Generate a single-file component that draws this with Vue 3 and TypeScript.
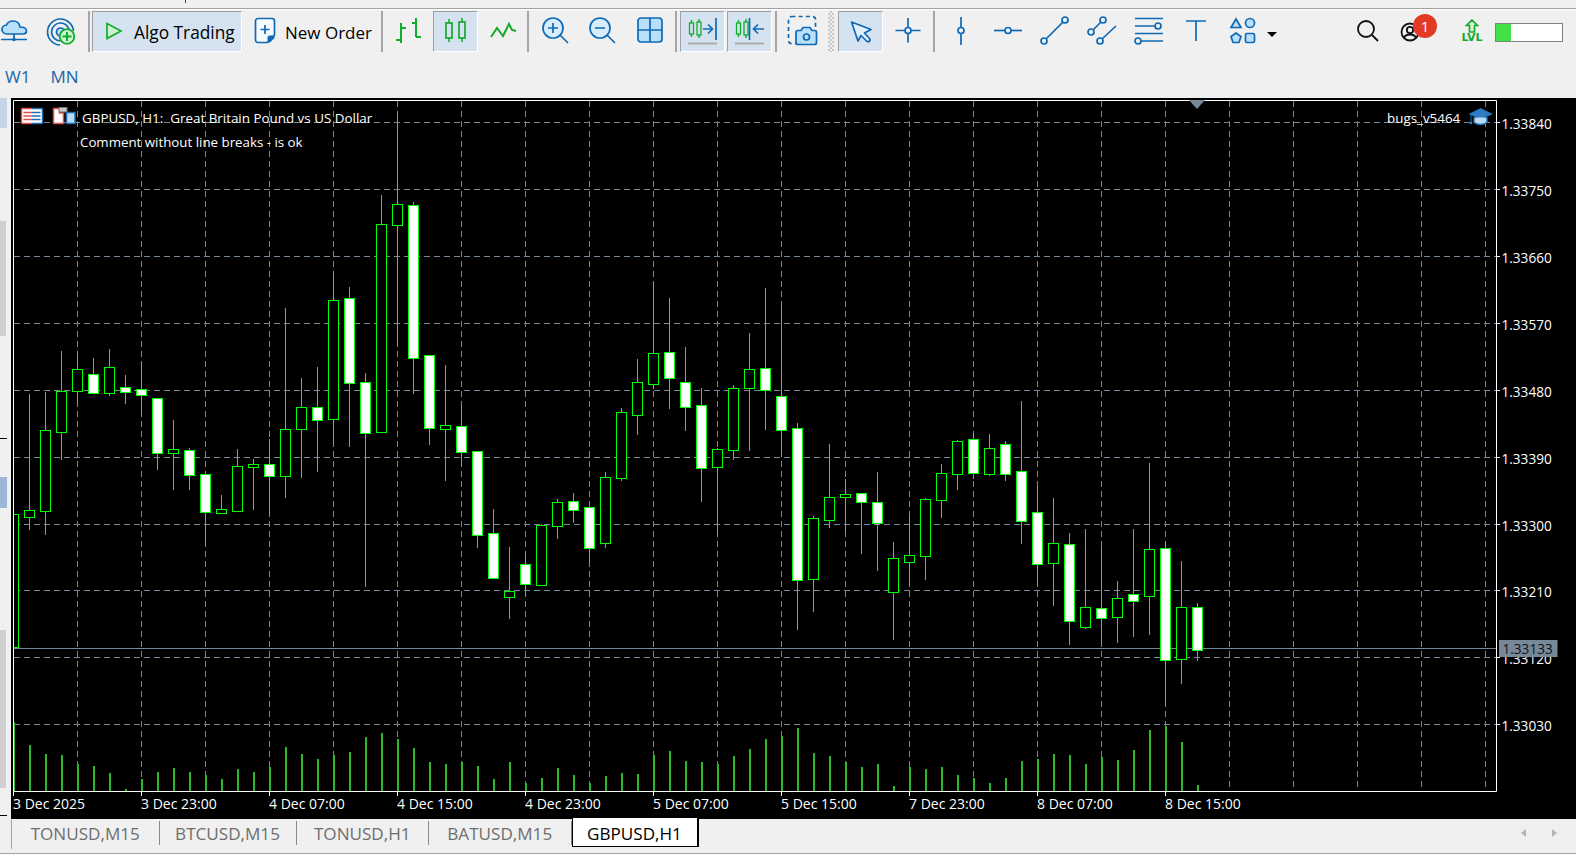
<script setup lang="ts">
type Raw = [number, number, number, number, number]
// wick top, wick bottom, body top, body bottom, bear (white)
const raw: Raw[] = [
  [514,647,514,647,0],[394,530,510,517,0],[392,535,430,511,0],[351,460,391,432,0],[351,404,369,391,0],
  [358,394,374,393,1],[349,396,367,393,0],[375,404,387,392,1],[362,415,389,395,1],[398,470,398,453,1],
  [420,490,449,453,0],[448,490,450,475,1],[474,545,474,512,1],[495,513,509,513,0],[449,512,466,511,0],
  [459,510,464,467,0],[439,515,464,476,1],[308,498,429,476,0],[378,478,407,429,0],[367,472,407,420,1],
  [271,445,300,419,0],[287,447,298,383,1],[373,587,382,433,1],[195,432,224,432,0],[113,345,204,225,0],
  [202,394,205,358,1],[355,445,355,428,1],[365,481,425,429,0],[405,467,426,452,1],[451,548,451,535,1],
  [509,578,533,578,1],[547,619,591,597,0],[553,596,564,584,1],[524,585,525,585,0],[499,539,502,526,0],
  [493,523,501,510,1],[507,563,507,548,1],[472,548,477,543,0],[408,481,412,478,0],[359,435,382,415,0],
  [282,389,353,384,0],[298,409,352,378,1],[347,431,382,407,1],[388,502,405,468,1],[448,537,449,467,0],
  [385,460,388,450,0],[333,451,369,388,0],[288,430,368,390,1],[306,457,396,430,1],[423,630,428,580,1],
  [516,612,518,579,0],[444,528,497,520,0],[479,533,494,497,0],[493,554,493,502,1],[472,571,502,523,1],
  [542,640,558,592,0],[515,585,555,562,0],[498,580,499,556,0],[464,518,473,500,0],[440,490,441,474,0],
  [433,479,439,473,1],[434,476,448,474,0],[441,481,444,474,1],[401,544,471,521,1],[486,585,512,564,1],
  [498,606,543,563,0],[533,645,544,621,1],[529,629,607,627,0],[547,645,608,618,1],[581,643,598,617,0],
  [529,637,594,601,1],[463,635,549,596,0],[541,705,548,660,1],[561,684,607,659,0],[603,661,607,650,1],
]
const vols = [69,46,37,36,27,25,18,2,12,19,23,19,16,12,22,19,24,44,37,32,36,39,54,58,52,43,29,27,29,25,12,29,8,13,23,16,8,15,18,17,36,40,30,29,27,35,42,52,55,63,38,35,29,24,27,5,24,22,24,16,13,8,13,30,32,37,36,27,34,31,41,61,65,49,6]

const candles = raw.map((c, i) => ({
  x: 13 + 16 * i,
  wt: c[0],
  wb: c[1],
  bt: c[2],
  bb: c[3],
  bear: c[4] === 1,
}))
const volumes = vols.map((v, i) => ({ x: 13 + 16 * i, h: v }))

const gridX: number[] = []
for (let k = 0; k <= 22; k++) gridX.push(77 + 64 * k)

const prices = [
  { y: 122, t: '1.33840' }, { y: 189, t: '1.33750' }, { y: 256, t: '1.33660' }, { y: 323, t: '1.33570' },
  { y: 390, t: '1.33480' }, { y: 457, t: '1.33390' }, { y: 524, t: '1.33300' }, { y: 590, t: '1.33210' },
  { y: 657, t: '1.33120' }, { y: 724, t: '1.33030' },
]
const times = [
  { x: 13, t: '3 Dec 2025' }, { x: 141, t: '3 Dec 23:00' }, { x: 269, t: '4 Dec 07:00' }, { x: 397, t: '4 Dec 15:00' },
  { x: 525, t: '4 Dec 23:00' }, { x: 653, t: '5 Dec 07:00' }, { x: 781, t: '5 Dec 15:00' }, { x: 909, t: '7 Dec 23:00' },
  { x: 1037, t: '8 Dec 07:00' }, { x: 1165, t: '8 Dec 15:00' },
]
const tabs = [
  { t: 'TONUSD,M15', w: 147.5, active: false },
  { t: 'BTCUSD,M15', w: 137, active: false },
  { t: 'TONUSD,H1', w: 132.5, active: false },
  { t: 'BATUSD,M15', w: 142.5, active: false },
  { t: 'GBPUSD,H1', w: 127, active: true },
]
const headerText = 'GBPUSD, H1:  Great Britain Pound vs US Dollar'
</script>

<template>
  <div class="app">
    <div class="strip"><span class="strip-mark"></span></div>

    <div class="toolbar">
      <div class="slot w28">
        <svg class="ic" viewBox="0 0 30 30"><path class="lt" d="M8 19C4.500 19 3 16.500 3 14.500C3 12 5 10 7.500 10C8.500 7.500 11 6 14 6C18 6 20.500 8.500 21 12C25 12 27.500 13.500 27.500 16C27.500 18 26 19 24 19Z"/><path d="M2 24.500H28M15 19V24.500"/><circle class="solid" cx="15" cy="24.500" r="1.800"/></svg>
      </div>
      <div class="slot w28 ml19">
        <svg class="ic" viewBox="0 0 30 30"><path d="M14 30A13 13 0 1 1 27.500 16M14.500 26A9 9 0 1 1 23.500 16"/><circle class="lt" cx="14.500" cy="17" r="4"/><circle class="gr-lt" cx="21" cy="21.500" r="7.300"/><path class="gr" d="M21 17V26M16.500 21.500H25.500"/></svg>
      </div>
      <div class="sep ml13"></div>
      <div class="btn active algo">
        <svg class="play" viewBox="0 0 18 18"><polygon points="2,1.500 16,9 2,16.500"/></svg>
        <span class="algo-text">Algo Trading</span>
      </div>
      <div class="neworder">
        <svg class="doc" viewBox="0 0 22 27"><path class="doc-b" d="M4 1.500H18A2.500 2.500 0 0 1 20.500 4V18L13.500 25.500H4A2.500 2.500 0 0 1 1.500 23V4A2.500 2.500 0 0 1 4 1.500Z"/><path class="doc-c" d="M20.500 18.500V21L16 25.500H13.500V20.500A2 2 0 0 1 15.500 18.500Z"/><path class="doc-p" d="M11 8V17M6.500 12.500H15.500"/></svg>
        <span class="no-text">New Order</span>
      </div>
      <div class="sep"></div>

      <div class="slot ml3">
        <svg class="ic" viewBox="0 0 30 30"><path class="gr" d="M7 8V28M7 13H12M2 25H7M22 3V22M22 22H27M18 8H22" /></svg>
      </div>
      <div class="btn active cell ml2">
        <svg class="ic" viewBox="0 0 30 30"><path class="gr thin" d="M8 4V8M8 23V27M21 3V7M21 23V27"/><rect class="gr-f" x="5" y="8" width="6" height="15"/><rect class="gr-f" x="18" y="7" width="6" height="16"/></svg>
      </div>
      <div class="slot ml2">
        <svg class="ic" viewBox="0 0 30 30"><polyline class="gr" points="3,22 9,13 15,21 21,9 24,15 28,16"/></svg>
      </div>
      <div class="sep ml2"></div>

      <div class="slot ml2">
        <svg class="ic" viewBox="0 0 30 30"><circle class="pale" cx="14" cy="13" r="10"/><path d="M21 20L29 28M9 13H19M14 8V18"/></svg>
      </div>
      <div class="slot ml2">
        <svg class="ic" viewBox="0 0 30 30"><circle class="pale" cx="14" cy="13" r="10"/><path d="M21 20L29 28M9 13H19"/></svg>
      </div>
      <div class="slot ml4">
        <svg class="ic" viewBox="0 0 30 30"><rect class="lt" x="3" y="3" width="24" height="24" rx="3"/><path d="M15 3V27M3 15H27"/></svg>
      </div>
      <div class="sep ml3"></div>

      <div class="btn active cell ml3">
        <svg class="ic" viewBox="0 0 30 30"><path class="gr thin" d="M3.500 5V8M3.500 19V22M11 4V7M11 20V23"/><rect class="gr-f small" x="1.500" y="8" width="4" height="11"/><rect class="gr-f small" x="9" y="7" width="4" height="13"/><path d="M15 14H24M20 9.500L24.500 14L20 18.500M28 3V25"/><path class="rule" d="M0 28.500H29"/></svg>
      </div>
      <div class="btn active cell ml2">
        <svg class="ic" viewBox="0 0 30 30"><path class="gr thin" d="M3.500 5V8M3.500 19V22M11 4V7M11 20V23"/><rect class="gr-f small" x="1.500" y="8" width="4" height="11"/><rect class="gr-f small" x="9" y="7" width="4" height="13"/><path d="M14.500 3V25M29 14H18.500M23 9.500L18.500 14L23 18.500"/><path class="rule" d="M0 28.500H29"/></svg>
      </div>
      <div class="sep ml3"></div>

      <div class="slot ml2">
        <svg class="ic" viewBox="0 0 30 30"><rect class="dash" x="1.500" y="1.500" width="27" height="27" rx="3"/><path class="lt" d="M11 15.500H14L16 12.500H23L25 15.500H27.500A2 2 0 0 1 29.500 17.500V27.500A2 2 0 0 1 27.500 29.500H11A2 2 0 0 1 9 27.500V17.500A2 2 0 0 1 11 15.500Z"/><circle cx="19.500" cy="22" r="3"/></svg>
      </div>
      <div class="grip"></div>
      <div class="btn active cell ml4">
        <svg class="ic" viewBox="0 0 30 30"><path class="pale2" d="M5.500 7L25 14.500L18.500 18L23.500 23.500A1 1 0 0 1 20.500 26L15 20.500L12 26Z"/></svg>
      </div>
      <div class="slot ml2">
        <svg class="ic" viewBox="0 0 30 30"><path d="M15 3V27.500M2.500 15.500H27.500"/><circle class="bgf" cx="15" cy="15.500" r="3"/></svg>
      </div>
      <div class="sep ml3"></div>

      <div class="slot ml3">
        <svg class="ic" viewBox="0 0 30 30"><path d="M15 2V30"/><circle class="bgf" cx="15" cy="15.500" r="3"/></svg>
      </div>
      <div class="slot ml2">
        <svg class="ic" viewBox="0 0 30 30"><path d="M1 15.500H29"/><circle class="bgf" cx="15" cy="15.500" r="3"/></svg>
      </div>
      <div class="slot ml2">
        <svg class="ic" viewBox="0 0 30 30"><path d="M6 24L23 7"/><circle class="bgf" cx="4" cy="26" r="3"/><circle class="bgf" cx="25" cy="5" r="3"/></svg>
      </div>
      <div class="slot ml2">
        <svg class="ic" viewBox="0 0 30 30"><path d="M6 15L14 7M15 24L29 11"/><circle class="bgf" cx="4" cy="17" r="3"/><circle class="bgf" cx="16" cy="5" r="3"/><circle class="bgf" cx="13" cy="26" r="3"/></svg>
      </div>
      <div class="slot ml2">
        <svg class="ic" viewBox="0 0 30 30"><path d="M1 3.500H29M1 11H21M1 18.500H29M7 26H29"/><circle class="bgf" cx="24" cy="11" r="3"/><circle class="bgf" cx="4" cy="26" r="3"/></svg>
      </div>
      <div class="slot ml2">
        <svg class="ic" viewBox="0 0 30 30"><path d="M5 6H25M15 6V26"/></svg>
      </div>
      <div class="slot ml2">
        <svg class="ic" viewBox="0 0 30 30"><polygon class="lt" points="8,4 13,12.500 3,12.500"/><circle class="lt" cx="22" cy="8" r="4.500"/><polygon class="lt" points="8,18 13,21.500 11,27.500 5,27.500 3,21.500"/><rect class="lt" x="17.500" y="18.500" width="9" height="9" rx="1.500"/></svg>
      </div>
      <div class="caret"></div>

      <div class="slot w30 ml75">
        <svg class="ic blk" viewBox="0 0 30 30"><circle cx="14" cy="14" r="8"/><path d="M20 20L26 26"/></svg>
      </div>
      <div class="slot w30 ml13 user">
        <svg class="ic blk" viewBox="0 0 30 30"><circle cx="15" cy="17" r="8.500"/><circle cx="15" cy="15" r="3.200"/><path d="M9 23C10 20 12 19.500 15 19.500C18 19.500 20 20 21 23"/></svg>
        <span class="badge">1</span>
      </div>
      <div class="lvl">
        <svg class="lvl-up" viewBox="0 0 14 14"><path d="M7 1L12.500 6.500H9.500V13H4.500V6.500H1.500Z"/></svg>
        <span class="lvl-t">LVL</span>
      </div>
      <div class="meter"><div class="meter-fill"></div></div>
    </div>

    <div class="tf">
      <span>W1</span>
      <span>MN</span>
    </div>

    <div class="workspace">
      <div class="rail">
        <div class="r-blue1"></div>
        <div class="r-gray1"></div>
        <div class="r-tick1"></div>
        <div class="r-blue2"></div>
        <div class="r-gray2"></div>
        <div class="r-tick2"></div>
      </div>

      <svg class="chart" width="1565" height="721" viewBox="11 98 1565 721">
        <defs>
          <clipPath id="plotArea"><rect x="14" y="101" width="1482" height="690"/></clipPath>
        </defs>

        <line v-for="x in gridX" :key="'gx' + x" class="grid" :x1="x + 0.5" :x2="x + 0.5" y1="101" y2="791"/>
        <line v-for="p in prices" :key="'gy' + p.y" class="grid" x1="14" x2="1496" :y1="p.y + 0.5" :y2="p.y + 0.5"/>
        <line class="ask" x1="14" x2="1496" y1="648.500" y2="648.500"/>

        <g clip-path="url(#plotArea)">
          <rect v-for="v in volumes" :key="'v' + v.x" class="vol" :x="v.x" :y="791 - v.h" width="2" :height="v.h"/>
          <g v-for="c in candles" :key="'c' + c.x">
            <line class="wick" :x1="c.x + 0.5" :x2="c.x + 0.5" :y1="c.wt" :y2="c.wb"/>
            <rect :class="c.bear ? 'bear' : 'bull'" :x="c.x - 4.5" :y="c.bt + 0.5" width="10" :height="c.bb - c.bt"/>
          </g>
        </g>

        <path class="frame" d="M13.500 100.500H1496.500V791.500H13.500Z"/>
        <line v-for="p in prices" :key="'pt' + p.y" class="frame" x1="1497" x2="1500" :y1="p.y + 0.5" :y2="p.y + 0.5"/>
        <line v-for="t in times" :key="'tt' + t.x" class="frame" :x1="t.x + 0.5" :x2="t.x + 0.5" y1="792" y2="796"/>

        <text v-for="p in prices" :key="'pl' + p.y" class="axis price" x="1501.500" :y="p.y + 7">{{ p.t }}</text>
        <text v-for="t in times" :key="'tl' + t.x" class="axis" :x="t.x" y="809">{{ t.t }}</text>

        <rect class="asklabel" x="1499" y="640" width="58.500" height="17"/>
        <text class="axis price dark" x="1502.500" y="654">1.33133</text>

        <polygon class="shift" points="1189,100 1205,100 1197,109"/>

        <rect class="i1w" x="21.500" y="108.500" width="21" height="15" rx="1"/>
        <path class="i1r" d="M32 108.500H22.500A1 1 0 0 0 21.500 109.500V122.500A1 1 0 0 0 22.500 123.500H32"/>
        <path class="i1b" d="M32 108.500H41.500A1 1 0 0 1 42.500 109.500V122.500A1 1 0 0 1 41.500 123.500H32"/>
        <path class="i1r" d="M23.500 112.500H32M23.500 116H32M23.500 119.500H32"/>
        <path class="i1b" d="M32 112.500H40.500M32 116H40.500M32 119.500H40.500"/>
        <path class="i2r" d="M53.500 108.500H59.500V113H63.500V123.500H53.500Z"/>
        <rect class="i2g" x="59" y="107.500" width="8" height="4.500"/>
        <rect class="i2b" x="66.500" y="112.500" width="8.500" height="11"/>

        <text class="label" x="82" y="122.500">{{ headerText }}</text>
        <text class="label comment" x="80" y="146.500">Comment without line breaks - is ok</text>
        <text class="label" x="1387" y="122.500">bugs_v5464</text>

        <path class="cap" d="M1480.500 108.500L1492 114L1480.500 119L1469.500 114Z"/>
        <path class="cap2" d="M1474 117.500V122.500C1477 125 1484 125 1487 122.500V117.500"/>
        <path class="cap3" d="M1471 115V122"/>
        <circle class="cap4" cx="1471" cy="123" r="1.300"/>
      </svg>
    </div>

    <div class="tabs">
      <div class="tab-lead"></div>
      <div
        v-for="t in tabs"
        :key="t.t"
        :class="['tab', { on: t.active }]"
        :style="{ width: t.w + 'px' }"
      >{{ t.t }}</div>
      <div class="tab-nav">
        <span class="tri-l"></span>
        <span class="tri-r"></span>
      </div>
    </div>
    <div class="foot"></div>
  </div>
</template>

<style>
html, body { margin: 0; background: #fff; }
</style>

<style scoped>
.app {
  width: 1576px;
  height: 862px;
  overflow: hidden;
  background: #f0f0f0;
  font-family: "Open Sans", "Liberation Sans", sans-serif;
  display: flex;
  flex-direction: column;
}
.strip {
  height: 8px;
  flex: none;
  border-bottom: 1px solid #a3a3a3;
  box-shadow: 0 1px 0 #fff;
  position: relative;
}
.strip-mark {
  position: absolute;
  left: 185px;
  top: 0;
  width: 1px;
  height: 3px;
  background: #5a4a30;
}
.toolbar {
  margin-top: 1px;
  padding-top: 1px;
  height: 41px;
  flex: none;
  display: flex;
  align-items: flex-start;
  color: #000;
}
.slot {
  width: 45px;
  height: 41px;
  flex: none;
  display: flex;
  justify-content: center;
  padding-top: 4px;
  box-sizing: border-box;
}
.w28 { width: 28px; }
.w30 { width: 30px; }
.ml2 { margin-left: 2px; }
.ml3 { margin-left: 3px; }
.ml4 { margin-left: 4px; }
.ml13 { margin-left: 13px; }
.ml19 { margin-left: 19px; }
.ml75 { margin-left: 75px; }
.sep {
  width: 2px;
  height: 41px;
  background: #a6a6a6;
  flex: none;
}
.btn {
  height: 41px;
  box-sizing: border-box;
  flex: none;
}
.active {
  background: #d5e3f0;
  border-left: 1px solid #a0a0a0;
  border-top: 1px solid #a0a0a0;
  border-right: 1px solid #fff;
  border-bottom: 1px solid #fff;
}
.cell {
  width: 45px;
  display: flex;
  justify-content: center;
  padding-top: 3px;
}
.algo {
  margin-left: 2px;
  width: 150px;
  display: flex;
  align-items: flex-start;
  padding-left: 12px;
  padding-top: 10px;
}
.play { width: 18px; height: 18px; flex: none; }
.play polygon { fill: #cdf5cd; stroke: #13ab2d; stroke-width: 1.700; }
.algo-text {
  margin-left: 11px;
  margin-top: -1px;
  font-size: 17.300px;
  line-height: 24px;
  white-space: nowrap;
}
.neworder {
  width: 139px;
  height: 41px;
  flex: none;
  display: flex;
  align-items: flex-start;
  padding-left: 12px;
  padding-top: 6px;
  box-sizing: border-box;
}
.doc { width: 22px; height: 27px; flex: none; }
.doc-b { fill: #f6fbff; stroke: #0f69b4; stroke-width: 1.700; }
.doc-c { fill: #0f69b4; }
.doc-p { fill: none; stroke: #0f69b4; stroke-width: 1.700; }
.no-text {
  margin-left: 9px;
  margin-top: 4px;
  font-size: 17px;
  line-height: 24px;
  white-space: nowrap;
}
.ic {
  width: 30px;
  height: 30px;
  fill: none;
  stroke: #0f69b4;
  stroke-width: 1.700;
  overflow: visible;
}
.ic .lt { fill: #b8e0fb; }
.ic .pale { fill: #d8edfb; }
.ic .pale2 { fill: #e2eef8; stroke-linejoin: round; }
.ic .bgf { fill: #f0f0f0; }
.ic .solid { fill: #0f69b4; stroke: none; }
.ic .gr { stroke: #13ab2d; stroke-width: 2; }
.ic .gr.thin { stroke-width: 1.500; }
.ic .gr-f { fill: none; stroke: #13ab2d; stroke-width: 1.700; }
.ic .gr-f.small { stroke-width: 1.300; }
.ic .gr-lt { fill: #c8f5d0; stroke: #13ab2d; stroke-width: 1.800; }
.ic .rule { stroke: #aaa; stroke-width: 2; }
.ic .dash { stroke-dasharray: 4 3.200; }
.ic.blk { stroke: #111; stroke-width: 1.800; }
.grip {
  margin-left: 4px;
  width: 6px;
  height: 41px;
  flex: none;
  background-image: conic-gradient(#c6c6c6 25%, transparent 0 50%, #c6c6c6 0 75%, transparent 0);
  background-size: 4px 4px;
}
.caret {
  margin-left: 2px;
  margin-top: 21px;
  flex: none;
  width: 0;
  height: 0;
  border-left: 5.500px solid transparent;
  border-right: 5.500px solid transparent;
  border-top: 5.500px solid #000;
}
.user { position: relative; }
.badge {
  position: absolute;
  left: 18px;
  top: 3px;
  width: 24px;
  height: 24px;
  border-radius: 50%;
  background: #e23a24;
  color: #fff;
  font-size: 15px;
  line-height: 24px;
  text-align: center;
}
.lvl {
  margin-left: 32px;
  width: 30px;
  height: 41px;
  flex: none;
  display: flex;
  flex-direction: column;
  align-items: center;
  padding-top: 8px;
  box-sizing: border-box;
}
.lvl-up { width: 14px; height: 14px; }
.lvl-up path { fill: #d8f5d8; stroke: #13ab2d; stroke-width: 1.600; }
.lvl-t {
  font-family: "DejaVu Sans", sans-serif;
  font-size: 11px;
  line-height: 10px;
  font-weight: 700;
  color: #13ab2d;
  margin-top: 0;
}
.meter {
  margin-left: 8px;
  margin-top: 12px;
  width: 68px;
  height: 19px;
  box-sizing: border-box;
  border: 1.500px solid #808080;
  background: #fff;
  flex: none;
}
.meter-fill { width: 15px; height: 100%; background: #42e042; }

.tf {
  height: 46px;
  flex: none;
  display: flex;
  align-items: center;
  gap: 20px;
  padding-left: 5px;
  padding-top: 3px;
  box-sizing: border-box;
  font-size: 17px;
  color: #1a66a8;
}

.workspace {
  height: 721px;
  flex: none;
  display: flex;
}
.rail {
  width: 11px;
  flex: none;
  display: flex;
  flex-direction: column;
}
.r-blue1 { width: 7px; height: 30px; background: #c6d6e6; flex: none; }
.r-gray1 { width: 6px; height: 115px; margin-top: 93px; background: #cfcfcf; flex: none; }
.r-tick1 { width: 7px; height: 1px; margin-top: 102px; background: #000; flex: none; }
.r-blue2 { width: 7px; height: 31px; margin-top: 38px; background: #9db8d6; flex: none; }
.r-gray2 { width: 6px; height: 158px; margin-top: 122px; background: #cfcfcf; flex: none; }
.r-tick2 { width: 7px; height: 1px; margin-top: 27px; background: #000; flex: none; }

.chart {
  display: block;
  flex: none;
  background: #000;
}
.grid { stroke: #778899; stroke-width: 1; stroke-dasharray: 6 4; }
.ask { stroke: #778899; stroke-width: 1; }
.wick { stroke: #00ff00; stroke-width: 1; }
.bull { fill: #000; stroke: #00ff00; stroke-width: 1; }
.bear { fill: #fff; stroke: #00ff00; stroke-width: 1; }
.vol { fill: #2bb82b; }
.frame { fill: none; stroke: #fff; stroke-width: 1; }
.axis {
  font-family: "Open Sans", "Liberation Sans", sans-serif;
  font-size: 14px;
  fill: #fff;
}
.price { font-size: 13.600px; }
.dark { fill: #111; }
.asklabel { fill: #778899; }
.shift { fill: #778899; }
.label {
  font-family: "Open Sans", "Liberation Sans", sans-serif;
  font-size: 13.400px;
  fill: #fff;
  white-space: pre;
}
.comment { font-size: 13.300px; }
.i1w { fill: #fff; }
.i1r { fill: none; stroke: #e2504a; stroke-width: 1.500; }
.i1b { fill: none; stroke: #1f6fb5; stroke-width: 1.500; }
.i2r { fill: #fff; stroke: #e2504a; stroke-width: 1.500; }
.i2g { fill: #c8c8c8; stroke: #777; stroke-width: 1; }
.i2b { fill: #b8dcf8; stroke: #1f6fb5; stroke-width: 1.500; }
.cap { fill: #2d7cc4; stroke: #1f6fb5; stroke-width: 1; }
.cap2 { fill: #bcdcf5; stroke: #1f6fb5; stroke-width: 1.500; }
.cap3 { fill: none; stroke: #1f6fb5; stroke-width: 1; }
.cap4 { fill: #2d7cc4; }

.tabs {
  height: 34px;
  flex: none;
  display: flex;
  align-items: flex-start;
  position: relative;
  font-size: 17.100px;
  color: #6e6e6e;
}
.tab-lead {
  width: 12px;
  height: 29px;
  flex: none;
  margin-top: 1px;
  box-sizing: border-box;
  border-right: 1px solid #a0a0a0;
}
.tab {
  height: 24px;
  margin-top: 2px;
  flex: none;
  box-sizing: border-box;
  line-height: 26px;
  text-align: center;
  border-right: 1px solid #8a8a8a;
  white-space: nowrap;
}
.tab.on {
  margin-top: -2px;
  height: 30px;
  line-height: 31px;
  background: #fff;
  color: #000;
  border: 1px solid #000;
  border-right-width: 2px;
  position: relative;
}
.tab-nav {
  margin-left: auto;
  width: 55px;
  height: 28px;
  flex: none;
  box-sizing: border-box;
  display: flex;
  justify-content: space-between;
  align-items: center;
  padding-right: 19px;
}
.tri-l {
  width: 0; height: 0;
  border-top: 4.500px solid transparent;
  border-bottom: 4.500px solid transparent;
  border-right: 5px solid #b5b5b5;
}
.tri-r {
  width: 0; height: 0;
  border-top: 4.500px solid transparent;
  border-bottom: 4.500px solid transparent;
  border-left: 5px solid #b5b5b5;
}
.foot {
  height: 8px;
  flex: none;
  border-top: 1px solid #a3a3a3;
  background: #fff;
}
</style>
